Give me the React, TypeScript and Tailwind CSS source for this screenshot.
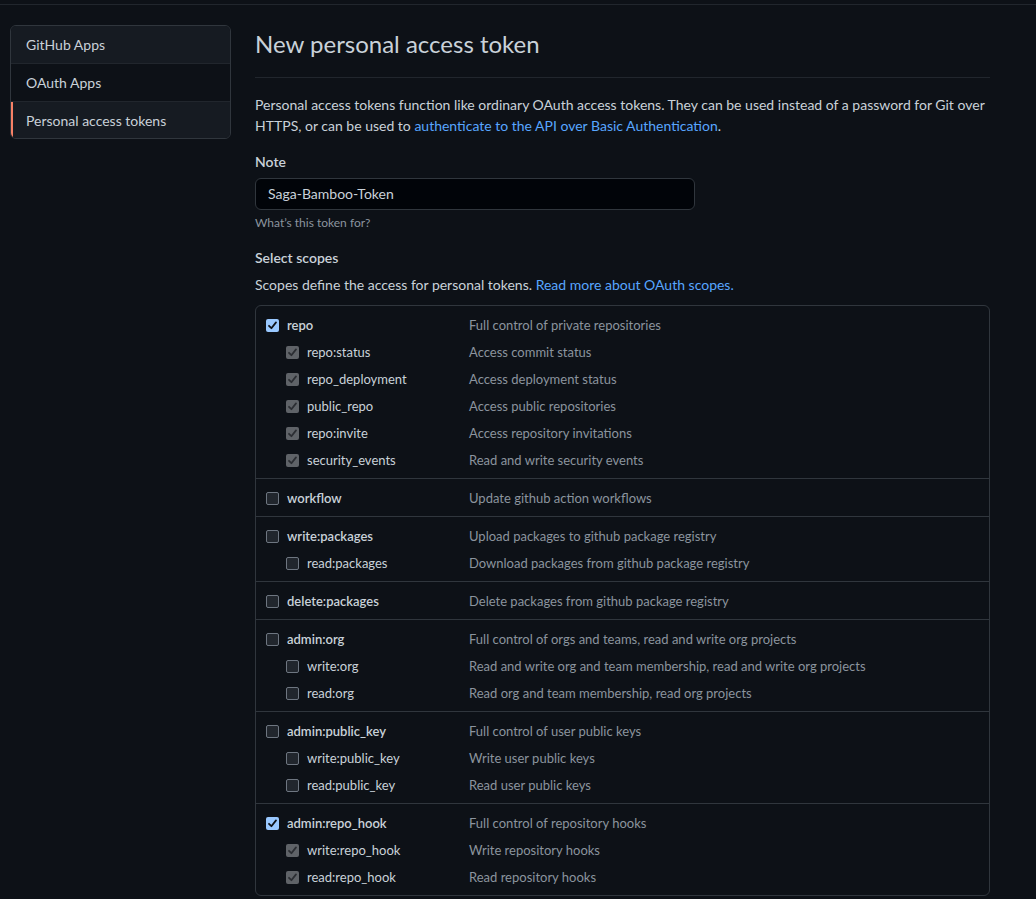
import React from "react";

type Scope = { name: string; desc: string; checked: boolean };
type Group = { parent: Scope; children: Scope[] };

const groups: Group[] = [
  {
    parent: { name: "repo", desc: "Full control of private repositories", checked: true },
    children: [
      { name: "repo:status", desc: "Access commit status", checked: true },
      { name: "repo_deployment", desc: "Access deployment status", checked: true },
      { name: "public_repo", desc: "Access public repositories", checked: true },
      { name: "repo:invite", desc: "Access repository invitations", checked: true },
      { name: "security_events", desc: "Read and write security events", checked: true },
    ],
  },
  { parent: { name: "workflow", desc: "Update github action workflows", checked: false }, children: [] },
  {
    parent: { name: "write:packages", desc: "Upload packages to github package registry", checked: false },
    children: [{ name: "read:packages", desc: "Download packages from github package registry", checked: false }],
  },
  { parent: { name: "delete:packages", desc: "Delete packages from github package registry", checked: false }, children: [] },
  {
    parent: { name: "admin:org", desc: "Full control of orgs and teams, read and write org projects", checked: false },
    children: [
      { name: "write:org", desc: "Read and write org and team membership, read and write org projects", checked: false },
      { name: "read:org", desc: "Read org and team membership, read org projects", checked: false },
    ],
  },
  {
    parent: { name: "admin:public_key", desc: "Full control of user public keys", checked: false },
    children: [
      { name: "write:public_key", desc: "Write user public keys", checked: false },
      { name: "read:public_key", desc: "Read user public keys", checked: false },
    ],
  },
  {
    parent: { name: "admin:repo_hook", desc: "Full control of repository hooks", checked: true },
    children: [
      { name: "write:repo_hook", desc: "Write repository hooks", checked: true },
      { name: "read:repo_hook", desc: "Read repository hooks", checked: true },
    ],
  },
];

function Check({ checked, disabled }: { checked: boolean; disabled?: boolean }) {
  if (!checked) {
    return (
      <span className="inline-block w-[13px] h-[13px] rounded-[2px] border border-[#6e7681] bg-[#21262d] shrink-0" />
    );
  }
  return (
    <span
      className={
        disabled
          ? "inline-flex items-center justify-center w-[13px] h-[13px] rounded-[2px] bg-[#5f6368] shrink-0"
          : "inline-flex items-center justify-center w-[13px] h-[13px] rounded-[2px] bg-[#99c8ff] shrink-0"
      }
    >
      <svg width="13" height="13" viewBox="0 0 13 13">
        <path
          d="M3 6.8 L5.4 9.2 L10 3.4"
          fill="none"
          stroke={disabled ? "#2b2e33" : "#0d1117"}
          strokeWidth="1.8"
          strokeLinecap="round"
          strokeLinejoin="round"
        />
      </svg>
    </span>
  );
}

function Row({ s, child }: { s: Scope; child?: boolean }) {
  return (
    <div className="flex items-center h-[27px] text-[13px]">
      <div className={child ? "flex items-center w-[203px] pl-[20px] shrink-0" : "flex items-center w-[203px] shrink-0"}>
        <Check checked={s.checked} disabled={child} />
        <span className={child ? "ml-[8px] text-[#c9d1d9]" : "ml-[8px] text-[#c9d1d9] font-semibold"}>{s.name}</span>
      </div>
      <span className="text-[#8b949e]">{s.desc}</span>
    </div>
  );
}

export default function App() {
  return (
    <div
      className="min-h-screen bg-[#0d1117] text-[14px] text-[#c9d1d9] leading-[21px]"
      style={{ fontFamily: "Lato, 'Liberation Sans', sans-serif" }}
    >
      <div className="h-[5px] border-b border-[#21262d]" />
      <div className="flex pl-[10px] pt-[20px]">
        <nav className="w-[221px] shrink-0 self-start border border-[#30363d] rounded-md overflow-hidden">
          <div className="h-[38px] flex items-center pl-[15px] bg-[#161b22] border-b border-[#21262d]">GitHub Apps</div>
          <div className="h-[38px] flex items-center pl-[15px] bg-[#0d1117] border-b border-[#21262d]">OAuth Apps</div>
          <div className="h-[36px] flex items-center pl-[13px] bg-[#161b22] border-l-2 border-[#f78166]">
            Personal access tokens
          </div>
        </nav>
        <main className="ml-[24px] w-[735px]">
          <div className="pb-[14px] border-b border-[#21262d]">
            <h2 className="text-[24px] leading-[38px] font-normal text-[#c9d1d9]">New personal access token</h2>
          </div>
          <p className="mt-[16px]">
            Personal access tokens function like ordinary OAuth access tokens. They can be used instead of a password for Git over
            <br />
            HTTPS, or can be used to{" "}
            <a className="text-[#58a6ff]">authenticate to the API over Basic Authentication</a>.
          </p>
          <div className="mt-[15px] font-semibold">Note</div>
          <div className="mt-[6px] w-[440px] h-[32px] flex items-center px-[12px] pb-[1px] border border-[#30363d] rounded-md bg-[#010409]">
            Saga-Bamboo-Token
          </div>
          <div className="mt-[4px] text-[12px] leading-[18px] text-[#8b949e]">What’s this token for?</div>
          <div className="mt-[15px] font-semibold">Select scopes</div>
          <p className="mt-[6px]">
            Scopes define the access for personal tokens.{" "}
            <a className="text-[#58a6ff]">Read more about OAuth scopes.</a>
          </p>
          <div className="mt-[10px] border border-[#30363d] rounded-md">
            {groups.map((g, i) => (
              <div
                key={g.parent.name}
                className={i === 0 ? "pl-[10px] pt-[6px] pb-[4px]" : "pl-[10px] pt-[6px] pb-[4px] border-t border-[#30363d]"}
              >
                <Row s={g.parent} />
                {g.children.map((c) => (
                  <Row key={c.name} s={c} child />
                ))}
              </div>
            ))}
          </div>
        </main>
      </div>
    </div>
  );
}
